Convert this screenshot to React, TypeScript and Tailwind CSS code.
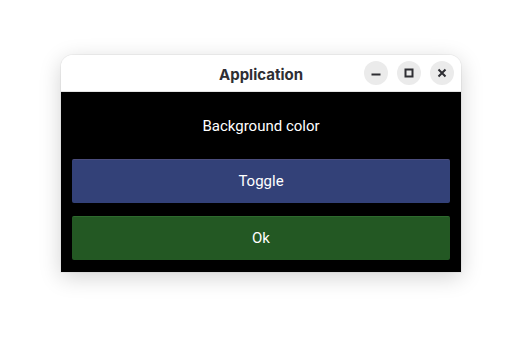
export default function App() {
  return (
    <div className="w-[522px] h-[339px] bg-white flex justify-center pt-[55px]">
      <div className="w-[400px] h-[217px] flex flex-col rounded-t-[12px] shadow-[0_5px_22px_rgba(0,0,0,0.18),0_0_0_1px_rgba(0,0,0,0.04)]">
        {/* Header bar */}
        <div className="relative h-[37px] bg-white rounded-t-[12px] flex items-center justify-center border-b border-[#e4e4e4]">
          <span className="text-[15px] font-bold text-[#2e2e33] font-['Inter',sans-serif] translate-y-[2px]">Application</span>
          <div className="absolute right-[7px] top-[6px] flex gap-[9px]">
            <div className="w-[24px] h-[24px] rounded-full bg-[#ebebeb] flex items-center justify-center">
              <svg width="12" height="12" viewBox="0 0 12 12">
                <rect x="1.5" y="6.5" width="9" height="2" fill="#2e2e33" />
              </svg>
            </div>
            <div className="w-[24px] h-[24px] rounded-full bg-[#ebebeb] flex items-center justify-center">
              <svg width="12" height="12" viewBox="0 0 12 12">
                <rect x="2.5" y="2.5" width="7" height="7" fill="none" stroke="#2e2e33" strokeWidth="2" />
              </svg>
            </div>
            <div className="w-[24px] h-[24px] rounded-full bg-[#ebebeb] flex items-center justify-center">
              <svg width="12" height="12" viewBox="0 0 12 12">
                <path d="M2.5 2.5 L9.5 9.5 M9.5 2.5 L2.5 9.5" stroke="#2e2e33" strokeWidth="2" />
              </svg>
            </div>
          </div>
        </div>

        {/* Body */}
        <div className="flex-1 bg-black px-[11px] pb-[12px] flex flex-col font-['Roboto',sans-serif] text-white text-[15px]">
          <div className="h-[67px] flex items-center justify-center translate-y-[1px]">Background color</div>
          <button className="h-[44px] rounded-[2px] bg-[#334178] border-t border-[#4a4c7c] flex items-center justify-center">
            Toggle
          </button>
          <button className="mt-[13px] h-[44px] rounded-[2px] bg-[#235823] border-t border-[#2e6a2e] flex items-center justify-center">
            Ok
          </button>
        </div>
      </div>
    </div>
  )
}
